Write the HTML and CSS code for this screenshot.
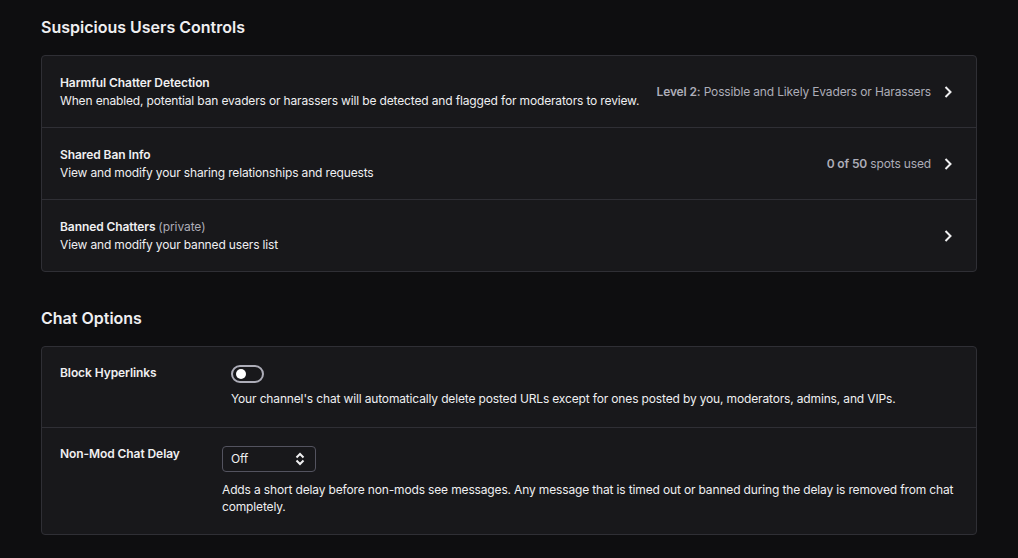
FILE: index.html
```html
<!DOCTYPE html>
<html>
<head>
<meta charset="utf-8">
<link rel="stylesheet" href="styles.css">
</head>
<body>
<main class="page">
  <section class="section">
    <h2 class="section-title">Suspicious Users Controls</h2>
    <div class="card">
      <div class="link-row">
        <div class="link-text">
          <div class="row-title">Harmful Chatter Detection</div>
          <div class="row-desc">When enabled, potential ban evaders or harassers will be detected and flagged for moderators to review.</div>
        </div>
        <div class="link-value"><strong>Level 2:</strong> Possible and Likely Evaders or Harassers</div>
        <span class="chev"><svg width="20" height="20" viewBox="0 0 20 20"><path d="M7.5 5 L12.5 10 L7.5 15" fill="none" stroke="#efeff1" stroke-width="2"/></svg></span>
      </div>
      <div class="link-row">
        <div class="link-text">
          <div class="row-title">Shared Ban Info</div>
          <div class="row-desc">View and modify your sharing relationships and requests</div>
        </div>
        <div class="link-value"><strong>0 of 50</strong> spots used</div>
        <span class="chev"><svg width="20" height="20" viewBox="0 0 20 20"><path d="M7.5 5 L12.5 10 L7.5 15" fill="none" stroke="#efeff1" stroke-width="2"/></svg></span>
      </div>
      <div class="link-row">
        <div class="link-text">
          <div class="row-title">Banned Chatters <span class="muted">(private)</span></div>
          <div class="row-desc">View and modify your banned users list</div>
        </div>
        <span class="chev"><svg width="20" height="20" viewBox="0 0 20 20"><path d="M7.5 5 L12.5 10 L7.5 15" fill="none" stroke="#efeff1" stroke-width="2"/></svg></span>
      </div>
    </div>
  </section>

  <section class="section">
    <h2 class="section-title">Chat Options</h2>
    <div class="card">
      <div class="setting-row">
        <div class="setting-label">Block Hyperlinks</div>
        <div class="setting-control indent">
          <div class="toggle"><span class="knob"></span></div>
          <div class="setting-desc">Your channel's chat will automatically delete posted URLs except for ones posted by you, moderators, admins, and VIPs.</div>
        </div>
      </div>
      <div class="setting-row">
        <div class="setting-label">Non-Mod Chat Delay</div>
        <div class="setting-control">
          <div class="select">
            <span>Off</span>
            <svg width="12" height="14" viewBox="0 0 12 14"><path d="M2.5 5.5 L6 2 L9.5 5.5 M2.5 8.5 L6 12 L9.5 8.5" fill="none" stroke="#efeff1" stroke-width="2"/></svg>
          </div>
          <div class="setting-desc select-desc">Adds a short delay before non-mods see messages. Any message that is timed out or banned during the delay is removed from chat completely.</div>
        </div>
      </div>
    </div>
  </section>
</main>
</body>
</html>
```

FILE: styles.css
```css
html, body {
  margin: 0;
  padding: 0;
  background: #0e0e10;
}
body {
  font-family: Inter, "Noto Sans", "Liberation Sans", sans-serif;
  color: #efeff1;
  font-size: 12px;
  line-height: 18px;
  letter-spacing: -0.15px;
}
.page {
  padding: 15px 41px 0 41px;
  width: 936px;
}
.section {
  margin-bottom: 34px;
}
.section-title {
  margin: 0 0 16px 0;
  font-size: 16px;
  line-height: 24px;
  font-weight: 600;
  letter-spacing: 0;
  color: #efeff1;
}
.card {
  background: #18181b;
  border: 1px solid #2f2f35;
  border-radius: 4px;
}
.link-row {
  display: flex;
  align-items: center;
  height: 71px;
  padding: 0 18px 0 18px;
  border-top: 1px solid #2f2f35;
}
.link-row:first-child {
  border-top: none;
}
.link-text {
  flex: 1;
  min-width: 0;
  white-space: nowrap;
}
.row-title {
  font-weight: 600;
  letter-spacing: -0.08px;
  color: #efeff1;
}
.row-desc {
  color: #efeff1;
}
.muted {
  color: #adadb8;
  font-weight: 400;
}
.link-value {
  color: #adadb8;
  margin-right: 7px;
  flex-shrink: 0;
  white-space: nowrap;
}
.link-value strong {
  font-weight: 600;
}
.chev {
  display: flex;
  width: 20px;
  height: 20px;
  flex-shrink: 0;
}
.setting-row {
  display: flex;
  padding: 17px 18px 19px 18px;
  border-top: 1px solid #2f2f35;
}
.setting-row:first-child {
  border-top: none;
}
.setting-label {
  width: 162px;
  flex-shrink: 0;
  font-weight: 600;
  letter-spacing: -0.08px;
}
.setting-control {
  flex: 1;
  padding-top: 1px;
}
.setting-control.indent {
  padding-left: 9px;
}
.toggle {
  box-sizing: border-box;
  width: 33px;
  height: 18px;
  border: 2px solid #adadb8;
  border-radius: 9px;
  position: relative;
}
.knob {
  position: absolute;
  left: 3px;
  top: 2px;
  width: 10px;
  height: 10px;
  border-radius: 50%;
  background: #ffffff;
}
.setting-desc {
  margin-top: 7px;
}
.select {
  box-sizing: border-box;
  width: 94px;
  height: 26px;
  border: 1px solid #53535f;
  border-radius: 4px;
  display: flex;
  align-items: center;
  justify-content: space-between;
  padding: 0 9px 0 8px;
}
.select-desc {
  margin-top: 9px;
  line-height: 17px;
}
```
